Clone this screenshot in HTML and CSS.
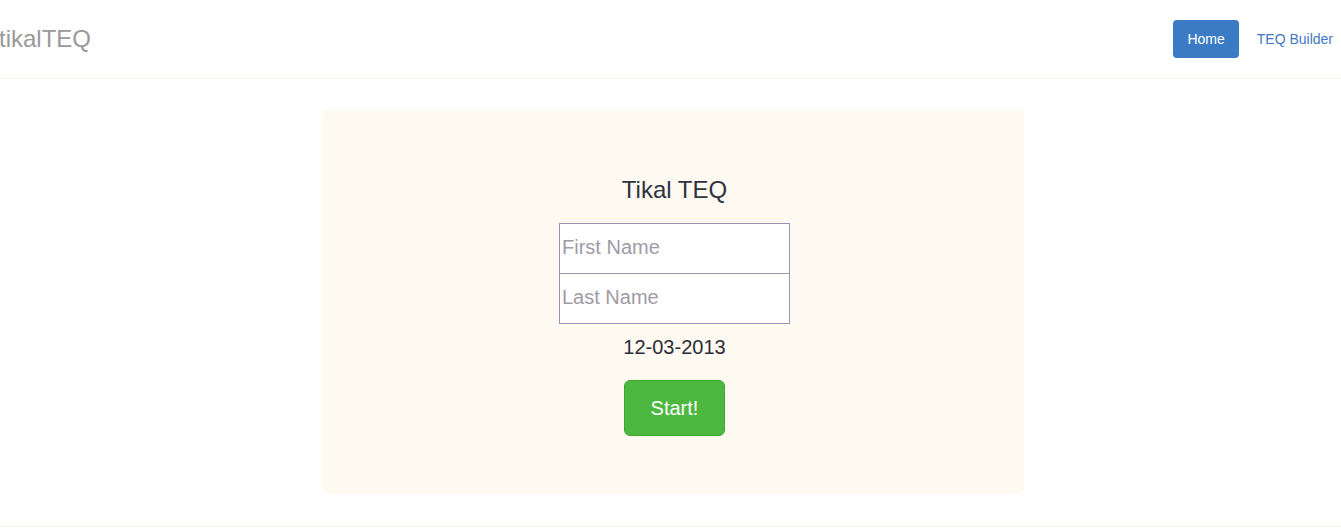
FILE: index.html
```html
<!DOCTYPE html>
<html>
<head>
<meta charset="utf-8">
<title>tikalTEQ</title>
<link rel="stylesheet" href="styles.css">
</head>
<body>
<nav class="navbar">
  <a class="brand" href="#">tikalTEQ</a>
  <ul class="nav">
    <li><a class="nav-link active" href="#">Home</a></li>
    <li><a class="nav-link" href="#">TEQ Builder</a></li>
  </ul>
</nav>
<main class="main">
  <section class="jumbotron">
    <h3 class="title">Tikal TEQ</h3>
    <form class="form">
      <input class="field" type="text" placeholder="First Name">
      <input class="field field-last" type="text" placeholder="Last Name">
    </form>
    <div class="date">12-03-2013</div>
    <button class="btn-start" type="button">Start!</button>
  </section>
</main>
<hr class="rule">
</body>
</html>
```

FILE: styles.css
```css
* { box-sizing: border-box; }
html, body { margin: 0; padding: 0; background: #fff; }
body {
  font-family: "Liberation Sans", Arial, sans-serif;
  color: #333;
  width: 1341px;
  height: 532px;
  overflow: hidden;
}
.navbar {
  height: 79px;
  display: flex;
  align-items: center;
  justify-content: space-between;
  border-bottom: 1px solid #fbf7e6;
  padding: 0;
}
.brand {
  font-size: 24px;
  color: #999;
  text-decoration: none;
  line-height: 30px;
  margin-left: -1px;
}
.nav {
  list-style: none;
  margin: 0 -6px 0 0;
  padding: 0;
  display: flex;
  align-items: center;
  gap: 4px;
}
.nav-link {
  display: block;
  font-size: 14px;
  line-height: 20px;
  padding: 9px 14px;
  border-radius: 4px;
  color: #4278c4;
  text-decoration: none;
}
.nav-link.active {
  background: #3b7bc6;
  color: #fff;
}
.main {
  display: flex;
  justify-content: center;
  padding: 30px 0 0 6px;
}
.jumbotron {
  width: 701px;
  height: 385px;
  background: #fefaf1;
  border-radius: 6px;
  display: flex;
  flex-direction: column;
  align-items: center;
  padding: 67px 0 0 2px;
}
.title {
  margin: 0;
  font-size: 24px;
  font-weight: normal;
  line-height: 28px;
  color: #2f3340;
}
.form {
  margin-top: 19px;
  display: flex;
  flex-direction: column;
}
.field {
  width: 231px;
  height: 51px;
  border: 1px solid #9494b4;
  background: #fff;
  font-family: "Liberation Sans", Arial, sans-serif;
  font-size: 20px;
  padding: 0 2px 2px;
  margin: 0;
  outline: none;
}
.field::placeholder { color: #a09aa6; }
.field-last { margin-top: -1px; }
.date {
  margin-top: 11px;
  font-size: 20px;
  line-height: 24px;
  color: #2b2d38;
}
.btn-start {
  margin-top: 21px;
  font-family: "Liberation Sans", Arial, sans-serif;
  font-size: 20px;
  line-height: 26px;
  padding: 14px 26px;
  color: #fff;
  background: #4db840;
  border: 1px solid #3fa633;
  border-radius: 6px;
}
.rule {
  margin: 32px 0 0;
  border: 0;
  border-top: 1px solid #f7f2e6;
}
```
